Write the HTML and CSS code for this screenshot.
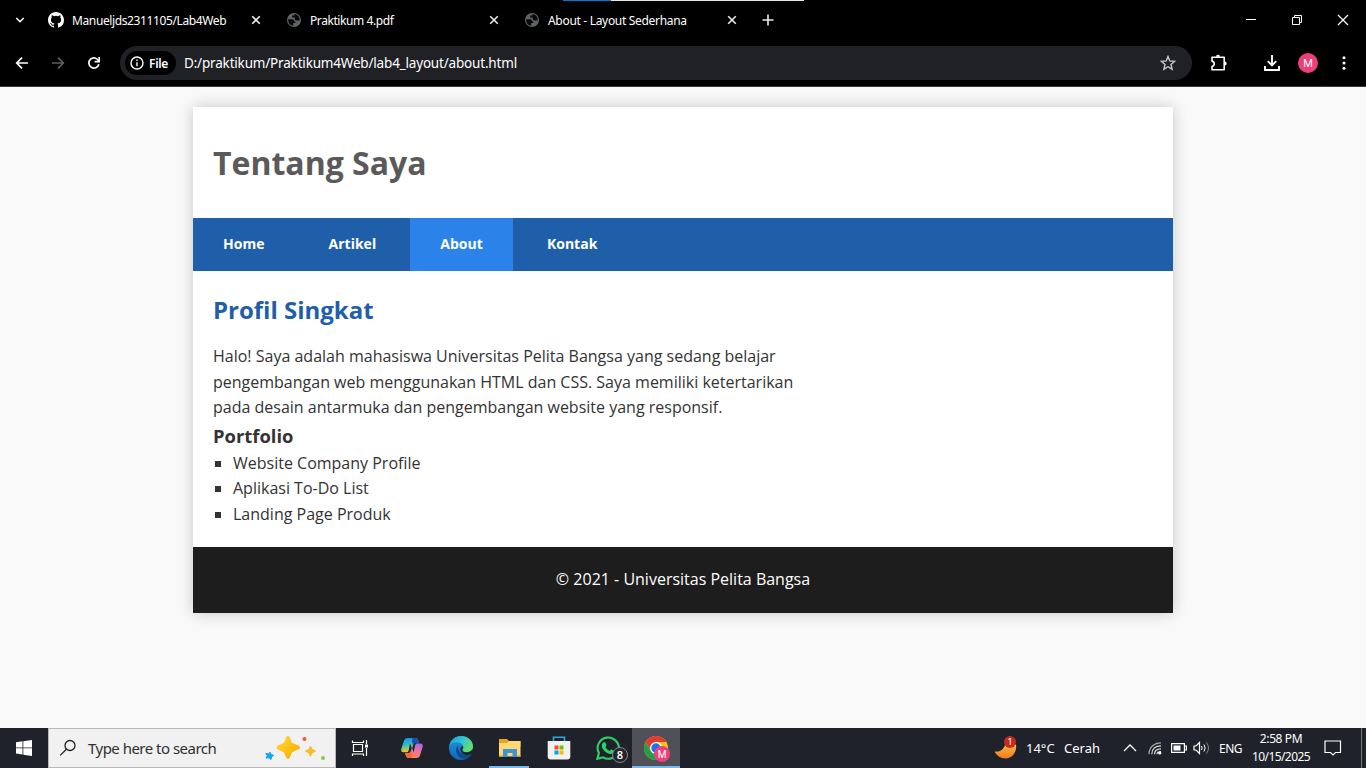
FILE: index.html
```html
<!DOCTYPE html>
<html lang="id">
<head>
<meta charset="utf-8">
<title>About - Layout Sederhana</title>
<link rel="stylesheet" href="styles.css">
</head>
<body>
<svg class="defs" width="0" height="0">
  <symbol id="close" viewBox="0 0 10 10"><path d="M1.200 1.200l7.600 7.600M8.800 1.200L1.200 8.800" stroke="#e8eaed" stroke-width="1.600" fill="none"/></symbol>
  <symbol id="globe" viewBox="0 0 16 16"><circle cx="8" cy="8" r="7" fill="#5f6368"/><path d="M2.300 7.300h3.500c1.700 0 2.500.9 2.500 2.100h1v1.500H7.200v2.700c-2.900 0-5-2.400-5-5.300zM8.300 2.300v1.200H6.100v2h2.700v1.300c0 1 .8 1.700 1.800 1.700h2.900C14.200 5 11.700 2.300 8.300 2.300z" fill="#08090a"/></symbol>
</svg>
<div class="browser">
  <div class="tabstrip">
    <div class="loadbar"><span></span></div>
    <svg class="caret" width="10" height="8" viewBox="0 0 10 8"><path d="M1.300 2L5 5.700 8.700 2" fill="none" stroke="#fff" stroke-width="1.600"/></svg>
    <div class="tab">
      <svg width="16" height="16" viewBox="0 0 16 16"><path fill="#fff" d="M8 0C3.580 0 0 3.580 0 8c0 3.540 2.290 6.530 5.470 7.590.4.070.55-.17.55-.38 0-.19-.01-.82-.01-1.490-2.010.37-2.530-.49-2.690-.94-.09-.23-.48-.94-.82-1.130-.28-.15-.68-.52-.01-.53.63-.01 1.080.58 1.230.82.72 1.210 1.870.87 2.330.66.070-.52.28-.87.51-1.070-1.780-.2-3.640-.89-3.640-3.950 0-.87.31-1.590.82-2.150-.08-.2-.36-1.020.08-2.120 0 0 .67-.21 2.200.82a7.600 7.600 0 0 1 4 0c1.530-1.040 2.200-.82 2.200-.82.44 1.100.16 1.920.08 2.120.51.56.82 1.270.82 2.150 0 3.070-1.870 3.750-3.650 3.950.29.25.54.73.54 1.480 0 1.070-.01 1.930-.01 2.200 0 .21.15.46.55.38A8.010 8.010 0 0 0 16 8c0-4.420-3.580-8-8-8z"/></svg>
      <span class="tab-title t1">Manueljds2311105/Lab4Web</span><svg width="10" height="10"><use href="#close"/></svg>
    </div>
    <div class="tab"><svg width="16" height="16"><use href="#globe"/></svg><span class="tab-title t2">Praktikum 4.pdf</span><svg width="10" height="10"><use href="#close"/></svg></div>
    <div class="tab"><svg width="16" height="16"><use href="#globe"/></svg><span class="tab-title t3">About - Layout Sederhana</span><svg width="10" height="10"><use href="#close"/></svg></div>
    <svg width="12" height="12" viewBox="0 0 12 12"><path d="M6 .5v11M.5 6h11" stroke="#e8eaed" stroke-width="1.600"/></svg>
    <div class="window-buttons">
      <svg width="12" height="12" viewBox="0 0 12 12"><path d="M1 5.500h10" stroke="#fff"/></svg>
      <svg width="12" height="12" viewBox="0 0 12 12"><path d="M1.500 3.500h7v7h-7zM3.500 3V1.500h7v7H9" fill="none" stroke="#fff"/></svg>
      <svg width="12" height="12" viewBox="0 0 12 12"><path d="M1 1l10 10M11 1L1 11" stroke="#fff" stroke-width="1.200"/></svg>
    </div>
  </div>
  <div class="toolbar">
    <svg class="nav-icon" width="16" height="16" viewBox="0 0 16 16"><path d="M14 8H3M8 2.700L2.700 8 8 13.300" fill="none" stroke="#fff" stroke-width="1.700"/></svg>
    <svg class="nav-icon" width="16" height="16" viewBox="0 0 16 16"><path d="M2 8h11M8 2.700L13.300 8 8 13.300" fill="none" stroke="#5c5e61" stroke-width="1.700"/></svg>
    <svg class="nav-icon" width="16" height="16" viewBox="0 0 16 16"><path d="M12.600 5.800A5.100 5.100 0 1 0 12.900 9.300" fill="none" stroke="#fff" stroke-width="1.700"/><path d="M13.200 2v4.600H8.600" fill="none" stroke="#fff" stroke-width="1.600"/></svg>
    <div class="omnibox">
      <div class="chip"><svg width="14" height="14" viewBox="0 0 14 14"><circle cx="7" cy="7" r="6" fill="none" stroke="#fff" stroke-width="1.400"/><path d="M7 6.200v4M7 3.500v1.500" stroke="#fff" stroke-width="1.400"/></svg><span>File</span></div>
      <span class="url">D:/praktikum/Praktikum4Web/lab4_layout/about.html</span>
      <svg class="star" width="16" height="16" viewBox="0 0 16 16"><path d="M8 1.500l1.800 4.400 4.800.4-3.600 3.200 1.100 4.700L8 11.700l-4.100 2.500L5 9.500 1.400 6.300l4.800-.4z" fill="none" stroke="#c7c7c7" stroke-width="1.400"/></svg>
    </div>
    <div class="tools">
      <svg width="20" height="20" viewBox="0 0 20 20"><path d="M3 4.200h12.200v12.600H3v-3.300c3-.7 3-4.700 0-5.400z" fill="none" stroke="#fff" stroke-width="1.600" stroke-linejoin="round"/><path d="M7 3.700a2 2 0 0 1 4 0zM15.700 8.500a2 2 0 0 1 0 4z" fill="#fff"/></svg>
      <svg class="download" width="18" height="18" viewBox="0 0 18 18"><path d="M9 1v10M4.800 7.200L9 11.400l4.200-4.200M2 12v4h14v-4" fill="none" stroke="#fff" stroke-width="1.900"/></svg>
      <span class="avatar">M</span>
      <svg width="4" height="16" viewBox="0 0 4 16"><g fill="#fff"><circle cx="2" cy="2.700" r="1.500"/><circle cx="2" cy="8" r="1.500"/><circle cx="2" cy="13.300" r="1.500"/></g></svg>
    </div>
  </div>
</div>
<div class="viewport">
  <div class="container">
    <header><h1>Tentang Saya</h1></header>
    <nav><a>Home</a><a>Artikel</a><a class="active">About</a><a>Kontak</a></nav>
    <main>
      <h2>Profil Singkat</h2>
      <p>Halo! Saya adalah mahasiswa Universitas Pelita Bangsa yang sedang belajar pengembangan web menggunakan HTML dan CSS. Saya memiliki ketertarikan pada desain antarmuka dan pengembangan website yang responsif.</p>
      <h3>Portfolio</h3>
      <ul><li>Website Company Profile</li><li>Aplikasi To-Do List</li><li>Landing Page Produk</li></ul>
    </main>
    <footer>© 2021 - Universitas Pelita Bangsa</footer>
  </div>
</div>
<div class="taskbar">
  <div class="start"><svg width="16" height="16" viewBox="0 0 16 16"><path fill="#fff" d="M0 2.200L6.500 1.300V7.500H0zM7.300 1.200L16 0v7.500H7.300zM0 8.300h6.500v6.200L0 13.600zM7.300 8.300H16V16l-8.700-1.200z"/></svg></div>
  <div class="search">
    <svg width="18" height="18" viewBox="0 0 18 18"><circle cx="11" cy="6.500" r="5" fill="none" stroke="#222" stroke-width="1.300"/><path d="M7.400 10.200L1.200 16.400" stroke="#222" stroke-width="1.300"/></svg>
    <span class="search-text">Type here to search</span>
    <svg class="sparkles" width="62" height="26" viewBox="0 0 62 26">
      <defs><linearGradient id="gold" x1="0" y1="0" x2="1" y2="1"><stop offset="0" stop-color="#ffda35"/><stop offset="1" stop-color="#f7a900"/></linearGradient></defs>
      <path d="M24 1c1.800 0 2 2.500 3.200 5.200.6 1.500 1.500 2 2.900 2.500C33 9.900 36 10.500 36 12.500s-3 2.400-5.900 3.700c-1.500.7-2.300 1.300-2.900 2.800C26 21.600 25.800 24 24 24s-2.100-2.400-3.300-5c-.7-1.500-1.300-2.200-2.800-2.800-2.900-1.300-5.400-1.800-5.400-3.700s2.500-2.500 5.400-3.800c1.500-.6 2.200-1.200 2.800-2.500C21.900 3.500 22.200 1 24 1z" fill="url(#gold)"/>
      <path d="M46.500 11c1 0 1.300 2.300 2 3s3.500 1 3.500 2-2.700 1.400-3.500 2.200-1 3.300-2 3.300-1.200-2.500-2-3.300-3.500-1.200-3.500-2.200 2.800-1.300 3.500-2 1-3 2-3z" fill="#fbbc2b"/>
      <path d="M6 17.200l1.100 2.400 2.500.8-2 1.500-.6 2.600-1.900-1.700-3 .3 1.200-2.400L1.800 18.500l2.700.4z" fill="#13a5ed" stroke="#13a5ed" stroke-linejoin="round"/>
      <circle cx="40.500" cy="4" r="2" fill="#f05a28"/><circle cx="59" cy="23" r="2" fill="#8dc63f"/>
    </svg>
  </div>
  <div class="apps">
    <div class="app tasks"><svg width="18" height="18" viewBox="0 0 18 18"><g fill="none" stroke="#fff" stroke-width="1.200"><path d="M2.500 5.500h9v7h-9zM1.500 1.500v2h11v-2M1.500 17v-2h11v2M15.500 1v4M15.500 9v8"/></g><path d="M14 5.500h3v3h-3z" fill="#fff"/></svg></div>
    <div class="app"><svg width="24" height="24" viewBox="0 0 24 24">
      <defs><linearGradient id="cp1" x1="0" y1="0" x2=".2" y2="1"><stop offset="0" stop-color="#2387ea"/><stop offset=".5" stop-color="#28bfc4"/><stop offset="1" stop-color="#f6cb20"/></linearGradient><linearGradient id="cp2" x1=".8" y1="0" x2=".3" y2="1"><stop offset="0" stop-color="#aa65ec"/><stop offset=".5" stop-color="#ef749b"/><stop offset="1" stop-color="#ff8a42"/></linearGradient></defs>
      <path d="M7.500 2h8c1.500 0 2.300.8 2.800 2.400L19 7h-3.500c-1.500 0-2 .9-2.400 2.200l-1 3.300L10 7.500 8.800 14c-.3 1.700-1 2.300-2.200 2.300H3.500c-2 0-2.700-1.300-2.200-3.300l2.500-8C4.500 3 5.500 2 7.500 2z" fill="url(#cp1)"/><path d="M12.500 2h3c1.500 0 2.300.8 2.800 2.400L19 7h-3.500c-1.300 0-1.900.6-2.300 1.500L12 6z" fill="#1850b8"/>
      <path d="M17 7.500h3.500c1.900 0 2.700 1.500 2.200 3.300l-2.500 8c-.7 2.200-1.700 3.200-3.700 3.200H8.500c-1.600 0-2.200-1-2.600-2.400L5 17h3.500c1.500 0 2-.9 2.400-2.200l1-3.300 1.800 5L15 9.800c.4-1.700.9-2.300 2-2.300z" fill="url(#cp2)"/><path d="M5 17h3.500c1.300 0 1.800-.6 2.200-1.500l1.800 3.500c-.5 2-1.200 3-2.500 3H8.500c-1.600 0-2.200-1-2.600-2.400z" fill="#f26a3c"/></svg></div>
    <div class="app"><svg width="24" height="24" viewBox="0 0 24 24">
      <defs><linearGradient id="ed1" x1="0" y1="0" x2="1" y2=".5"><stop offset="0" stop-color="#1994db"/><stop offset=".55" stop-color="#35c4d3"/><stop offset="1" stop-color="#62df68"/></linearGradient><linearGradient id="ed2" x1="0" y1="0" x2="0" y2="1"><stop offset="0" stop-color="#1a9be0"/><stop offset="1" stop-color="#1266bd"/></linearGradient></defs>
      <circle cx="12" cy="12" r="12" fill="url(#ed2)"/><path d="M.3 10C1.500 4 6.200 0 12 0c6.800 0 12 4.800 12 10.200 0 3.500-2.700 6-6.200 6-2.800 0-4.500-1-4.500-2.100 0-1 1.100-1.100 1.100-3.100 0-3-3-4.800-6.700-4.800C4 6.200 1.500 7.700.3 10z" fill="url(#ed1)"/>
      <path d="M9.300 9.600c-2.500 2.100-3 5.400-1 8.800 2.200 3.700 6.200 5.500 10.200 3.300 1.700-1 3-2.200 4-3.900-3 1.700-7.700 1.700-10.600-.7-2.600-2-3.300-4.700-2.600-7.500z" fill="#104a8d"/><path d="M12.300 10.500c1-.8 2.300.2 1.800 1.500-.5 1-.9 1.300-.8 2.200.3 1.900 3.700 2.500 6.200 1.800 2-.5 3.500-1.600 4.500-3v2.800c-.3 1-.8 1.600-1.500 2.200-3 1.500-6.900 1.300-9-.5-2.300-2-3-5-1.200-7z" fill="#20222c"/></svg></div>
    <div class="app open"><svg width="22" height="20" viewBox="0 0 22 20"><path d="M0 1h8l2 2h11.500v6H0z" fill="#e5a321"/><path d="M0 5h8l2-2h11.500v15.500H0z" fill="#ffd875"/><path d="M4 19v-8h14v8h-4.500v-4h-5v4z" fill="#3b96d9"/><path d="M0 17h4v1.500H0zM18 17h3.500v1.500H18z" fill="#edbc47"/></svg></div>
    <div class="app"><svg width="24" height="24" viewBox="0 0 24 24"><path d="M6.500 6V1.200h11V6" fill="none" stroke="#2aa9e6" stroke-width="1.600"/><path d="M.7 5h22.600v15.500c0 2-1 3-3 3H3.700c-2 0-3-1-3-3z" fill="#f1f1f1"/><path d="M7.500 9.500h4v4h-4z" fill="#f25022"/><path d="M12.500 9.500h4v4h-4z" fill="#7fba00"/><path d="M7.500 14.500h4v4h-4z" fill="#00a4ef"/><path d="M12.500 14.500h4v4h-4z" fill="#ffb900"/></svg></div>
    <div class="app"><svg width="24" height="24" viewBox="0 0 24 24"><path d="M1.400 22.800l1.500-5.700A10.600 10.600 0 1 1 7 21.300z" fill="none" stroke="#2bd366" stroke-width="2.100"/><path d="M7.500 6.200h1.300c.4 0 .5.200.7.600l.9 2.200c.2.500-.4 1.200-1 1.900 1 2 2.500 3.200 4.500 4 .6-.7 1-1.500 1.500-1.300l2.500 1.200c.5.200.4.500.3 1-.5 1.700-2.300 2.400-3.700 2.200-4.500-.8-8-4.600-8.700-7.600-.3-1.600.6-3.500 1.700-4.200z" fill="#2bd366"/></svg><span class="badge">8</span></div>
    <div class="app open current"><svg width="24" height="24" viewBox="0 0 24 24"><circle cx="12" cy="12" r="12" fill="#fbc116"/><path d="M1.600 6A12 12 0 0 1 22.400 6H12L7 15z" fill="#e33b2e"/><path d="M1.600 6A12 12 0 0 0 12 24l5.200-9-10.400 0z" fill="#269f4b"/><circle cx="12" cy="12" r="6" fill="#fff"/><circle cx="12" cy="12" r="4.700" fill="#1a73e8"/></svg><span class="profile">M</span></div>
  </div>
  <div class="tray">
    <div class="weather"><svg width="24" height="24" viewBox="0 0 24 24"><defs><linearGradient id="moon" x1="0" y1="0" x2="0" y2="1"><stop offset="0" stop-color="#ffbd4c"/><stop offset="1" stop-color="#f17a1c"/></linearGradient></defs><path d="M.7 15.500c4.800.6 9.300-1.400 10.800-8.500L22 8.500c1.200 7-3.500 14-10.500 14C6.500 22.500 2.500 19.500.7 15.500z" fill="url(#moon)"/></svg><span class="alert">1</span></div>
    <span class="temp">14°C</span><span class="cond">Cerah</span>
    <svg class="chev" width="14" height="8" viewBox="0 0 14 8"><path d="M1 7l6-6 6 6" fill="none" stroke="#fff" stroke-width="1.300"/></svg>
    <svg class="wifi" width="14" height="14" viewBox="0 0 14 14"><g fill="none" stroke="#ddd" stroke-width="1.200"><path d="M1 13.200C1 6.500 6 1.800 13 1.800" stroke="#aaa"/><path d="M3.800 13.200C3.800 8 7.500 4.800 13 4.800M6.500 13.200c0-3.500 2.500-5.400 6.500-5.400M9 13.200c0-1.500 1.500-2.500 4-2.500"/></g><circle cx="11.800" cy="12" r="1.600" fill="#fff"/></svg>
    <svg class="battery" width="16" height="10" viewBox="0 0 16 10"><path d="M.6.600h12.800v8.800H.6zM14 3h1.400v4H14" fill="none" stroke="#fff" stroke-width="1.200"/><path d="M2.500 2.500h7v5h-7z" fill="#fff"/></svg>
    <svg class="volume" width="17" height="14" viewBox="0 0 17 14"><path d="M1 5h2l3.500-3.500v11L3 9H1z" fill="none" stroke="#fff" stroke-width="1.200"/><path d="M8.500 5q1.200 2 0 4M11 3.500q2.200 3.500 0 7" fill="none" stroke="#fff"/><path d="M13.500 1.500q4 5.500 0 11" fill="none" stroke="#888"/></svg>
    <span class="lang">ENG</span>
    <div class="clock"><span class="time">2:58 PM</span><span class="date">10/15/2025</span></div>
    <svg class="notice" width="18" height="18" viewBox="0 0 18 18"><path d="M1 2h15.500v11.500h-5L9 16l-2.500-2.500H1z" fill="none" stroke="#fff" stroke-width="1.200"/></svg>
    <span class="peek"></span>
  </div>
</div>
</body>
</html>
```
FILE: styles.css
```css
* { margin: 0; padding: 0; box-sizing: border-box; }
body { height: 768px; overflow: hidden; display: flex; flex-direction: column; background: #f9f9f9; font-family: "Open Sans", sans-serif; }
svg { display: block; flex: none; }
.defs { position: absolute; }
.browser { height: 87px; flex: none; background: #000; border-bottom: 1px solid #3c3c3c; color: #fff; font-family: "Noto Sans", sans-serif; }
.tabstrip { height: 40px; display: flex; align-items: center; position: relative; }
.loadbar { position: absolute; top: 0; left: 563px; width: 241px; height: 1px; background: #e6e6e6; }
.loadbar span { display: block; width: 48px; height: 1px; background: #0078d7; }
.caret { margin: 0 23px 0 15px; }
.tab { width: 238px; padding-right: 25px; display: flex; align-items: center; }
.tab-title { flex: 1; margin-left: 8px; font-size: 12px; white-space: nowrap; }
.t1 { letter-spacing: -.38px; }
.t2 { letter-spacing: -.42px; }
.t3 { letter-spacing: -.31px; }
.window-buttons { margin-left: auto; margin-right: 17px; display: flex; gap: 34px; }
.toolbar { height: 46px; display: flex; align-items: center; padding-left: 14px; }
.nav-icon { margin-right: 20px; }
.omnibox { margin-left: -2px; width: 1072px; height: 34px; border-radius: 17px; background: #202124; display: flex; align-items: center; padding-left: 5px; }
.chip { width: 51px; height: 24px; border-radius: 12px; background: #000; display: flex; align-items: center; gap: 5px; padding-left: 5px; font-size: 12px; font-weight: 600; letter-spacing: -.3px; }
.url { flex: 1; margin-left: 8px; font-size: 13.500px; letter-spacing: -.18px; white-space: nowrap; }
.star { margin-right: 16px; }
.tools { flex: 1; display: flex; align-items: center; padding-left: 17px; }
.download { margin-left: 34px; }
.avatar { width: 20px; height: 20px; margin: 0 24px 0 17px; border-radius: 50%; background: #ec407a; font: 11px/21px Roboto, sans-serif; text-align: center; }

.viewport { flex: 1; padding-top: 20px; line-height: 1.6; color: #333; font-size: 16px; }
.container { width: 980px; margin: 0 auto; background: #fff; box-shadow: 0 0 15px rgba(0,0,0,.2); }
header { padding: 30px 20px; }
h1 { font-size: 32px; color: #5a5a5a; }
nav { display: flex; gap: 4.160px; background: #1f5faa; }
nav a { padding: 15px 30px; color: #fff; font-size: 14px; font-weight: 700; }
nav .active { background: #2b83ea; }
main { padding: 20px; }
h2 { margin-bottom: 15px; font-size: 24px; color: #1f5faa; }
h3 { font-size: 18.400px; line-height: 29.950px; }
p { width: 600px; }
ul { padding-left: 20px; list-style: square; }
footer { padding: 20px; background: #1d1d1d; color: #fff; text-align: center; }

.taskbar { height: 40px; flex: none; display: flex; background: #1f222b; color: #fff; }
.start { width: 48px; display: flex; align-items: center; justify-content: center; }
.search { width: 288px; display: flex; align-items: center; padding-left: 10px; border: 1px solid #b8b8b8; background: #f1f1f1; }
.search-text { margin-left: 11px; font: 15px "Noto Sans", sans-serif; letter-spacing: -.52px; color: #303030; white-space: nowrap; }
.sparkles { margin-left: auto; margin-right: 9px; }
.apps { display: flex; }
.app { width: 49px; display: flex; align-items: center; justify-content: center; position: relative; }
.app.tasks { width: 51px; padding-right: 3px; }
.app.open::after { content: ""; position: absolute; left: 4px; bottom: 0; width: 40px; height: 2px; background: #76b9ed; }
.app.current { width: 48px; background: #505158; }
.app.current::after { left: 0; width: 48px; }
.badge { position: absolute; left: 29px; top: 19px; width: 16px; height: 16px; border: 1px solid #888; border-radius: 50%; background: #22252d; font: 600 11px/14px "Noto Sans", sans-serif; text-align: center; }
.profile { position: absolute; left: 22px; top: 18px; width: 16px; height: 16px; border-radius: 50%; background: #ec407a; font: 10px/17px Roboto, sans-serif; text-align: center; }
.tray { margin-left: auto; display: flex; align-items: center; font-family: "Noto Sans", sans-serif; font-size: 12px; white-space: nowrap; }
.weather { position: relative; margin-right: 8px; }
.alert { position: absolute; left: 10px; top: 0; width: 12px; height: 12px; border-radius: 50%; background: #c42b1c; font-size: 9px; line-height: 12px; text-align: center; }
.temp, .cond { font-size: 13px; }
.temp { width: 38px; }
.cond { width: 59px; }
.chev { margin-right: 11px; }
.wifi { margin-right: 9px; }
.battery { margin-right: 6px; }
.volume { margin-right: 9px; }
.lang { width: 30px; letter-spacing: -.5px; }
.clock { width: 64px; margin: 0 11px 0 0; display: flex; flex-direction: column; align-items: center; line-height: 18px; }
.time { letter-spacing: -.4px; }
.date { letter-spacing: -.6px; }
.notice { margin-right: 19px; }
.peek { width: 5px; height: 40px; border-left: 1px solid #777; }
```
